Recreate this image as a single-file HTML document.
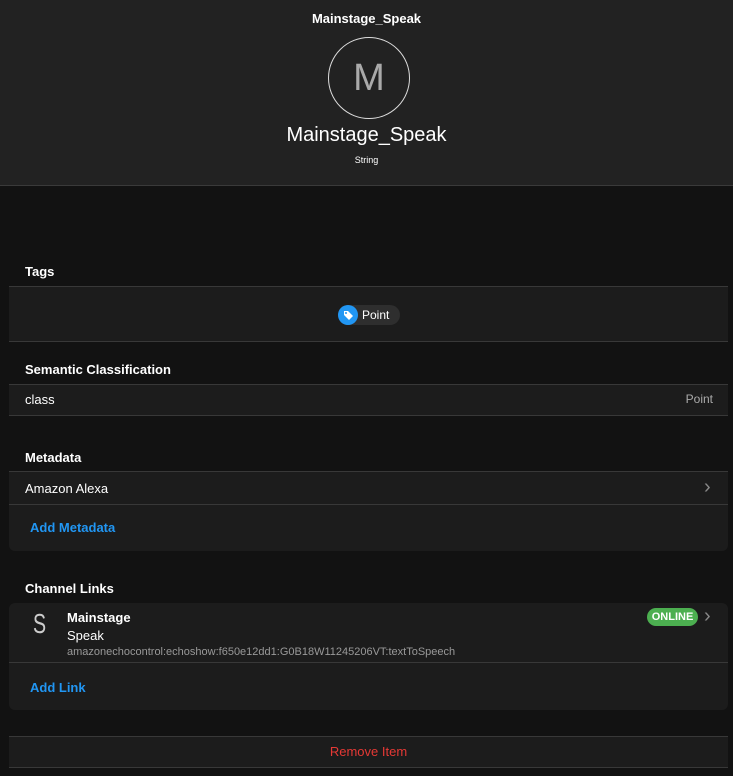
<!DOCTYPE html>
<html><head><meta charset="utf-8"><style>
*{margin:0;padding:0;box-sizing:border-box}
body{width:733px;height:776px;background:#121212;font-family:"Liberation Sans",sans-serif;color:#fff;position:relative;overflow:hidden}
.a{position:absolute}
.hdr{left:0;top:0;width:733px;height:186px;background:#222;border-bottom:1px solid #3a3a3a}
.t{font-size:13px;font-weight:bold}
.box{background:#1c1c1c;left:9px;width:719px}
.line{height:1px;background:#383838;left:9px;width:719px}
.chev{font-size:20px;color:#888;line-height:20px}
</style></head><body>
<div class="a hdr"></div>
<div class="a t" style="left:0;width:733px;text-align:center;top:11px;font-size:13px">Mainstage_Speak</div>
<div class="a" style="left:328px;top:37px;width:82px;height:82px;border:1px solid #ddd;border-radius:50%;text-align:center;line-height:80px;font-size:38px;color:#aaa">M</div>
<div class="a" style="left:0;width:733px;text-align:center;top:124px;font-size:20px">Mainstage_Speak</div>
<div class="a" style="left:0;width:733px;text-align:center;top:155px;font-size:9px">String</div>

<div class="a t" style="left:25px;top:264px">Tags</div>
<div class="a box" style="top:286px;height:56px;border-top:1px solid #383838;border-bottom:1px solid #383838"></div>
<div class="a" style="left:338px;top:305px;width:62px;height:20px;border-radius:10px;background:#2e2e2e"></div>
<div class="a" style="left:338px;top:305px;width:20px;height:20px;border-radius:50%;background:#2196f3"></div>
<svg class="a" style="left:341px;top:308px" width="14" height="14" viewBox="0 0 14 14"><path d="M3 3h4l5 5-4 4-5-5z" fill="#fff"/><circle cx="5" cy="5" r="1" fill="#2196f3"/></svg>
<div class="a" style="left:362px;top:308px;font-size:12px">Point</div>

<div class="a t" style="left:25px;top:362px">Semantic Classification</div>
<div class="a box" style="top:384px;height:32px;border-top:1px solid #383838;border-bottom:1px solid #383838"></div>
<div class="a" style="left:25px;top:392px;font-size:13px">class</div>
<div class="a" style="right:20px;top:392px;font-size:12px;color:#aaa">Point</div>

<div class="a t" style="left:25px;top:450px">Metadata</div>
<div class="a box" style="top:471px;height:80px;border-radius:0 0 6px 6px;border-top:1px solid #383838"></div>
<div class="a line" style="top:504px"></div>
<div class="a" style="left:25px;top:481px;font-size:13px">Amazon Alexa</div>
<div class="a chev" style="left:704px;top:477px">›</div>
<div class="a" style="left:30px;top:520px;font-size:13px;font-weight:bold;color:#2196f3">Add Metadata</div>

<div class="a t" style="left:25px;top:581px">Channel Links</div>
<div class="a box" style="top:603px;height:107px;border-radius:6px"></div>
<div class="a line" style="top:662px"></div>
<div class="a" style="left:33px;top:608px;font-size:28px;color:#ccc;transform:scaleX(0.7);transform-origin:left">S</div>
<div class="a t" style="left:67px;top:610px">Mainstage</div>
<div class="a" style="left:67px;top:628px;font-size:13px">Speak</div>
<div class="a" style="left:67px;top:646px;font-size:11px;color:#999">amazonechocontrol:echoshow:f650e12dd1:G0B18W11245206VT:textToSpeech</div>
<div class="a" style="left:647px;top:608px;width:51px;height:18px;border-radius:9px;background:#4caf50;color:#fff;font-size:11px;font-weight:bold;text-align:center;line-height:18px">ONLINE</div>
<div class="a chev" style="left:704px;top:606px">›</div>
<div class="a" style="left:30px;top:680px;font-size:13px;font-weight:bold;color:#2196f3">Add Link</div>

<div class="a box" style="top:736px;height:32px;border-top:1px solid #383838;border-bottom:1px solid #383838;text-align:center;color:#e53935;font-size:13px;line-height:30px">Remove Item</div>
</body></html>
